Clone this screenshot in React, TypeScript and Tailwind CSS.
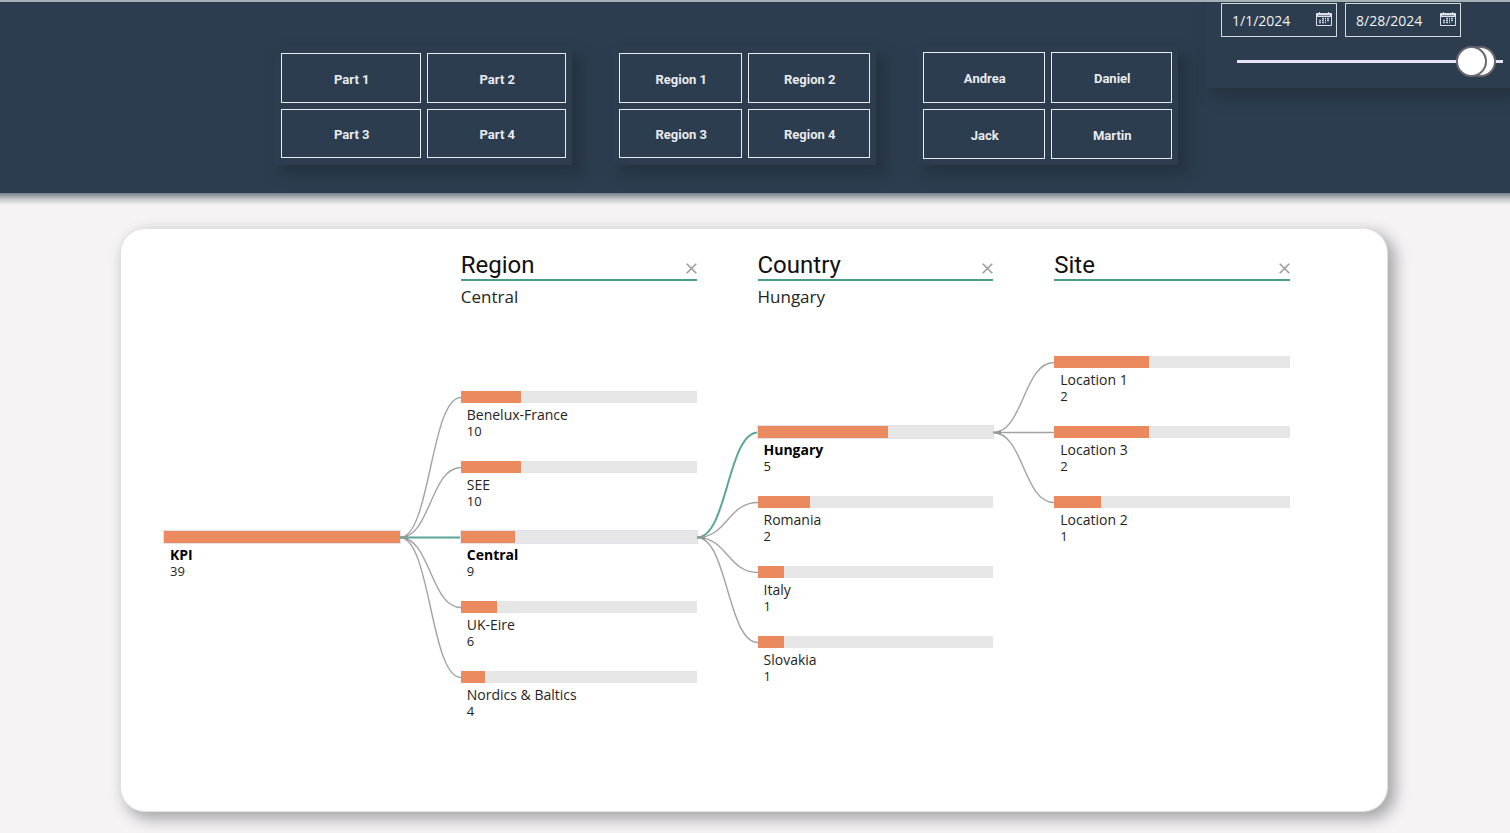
import React, { useState } from "react";

type TreeNode = { label: string; value: number; total: number; selected?: boolean };
type Link = { from: number; to: number; active?: boolean };

const root: TreeNode[] = [{ label: "KPI", value: 39, total: 39, selected: true }];

const regions: TreeNode[] = [
  { label: "Benelux-France", value: 10, total: 39 },
  { label: "SEE", value: 10, total: 39 },
  { label: "Central", value: 9, total: 39, selected: true },
  { label: "UK-Eire", value: 6, total: 39 },
  { label: "Nordics & Baltics", value: 4, total: 39 },
];

const countries: TreeNode[] = [
  { label: "Hungary", value: 5, total: 9, selected: true },
  { label: "Romania", value: 2, total: 9 },
  { label: "Italy", value: 1, total: 9 },
  { label: "Slovakia", value: 1, total: 9 },
];

const sites: TreeNode[] = [
  { label: "Location 1", value: 2, total: 5 },
  { label: "Location 3", value: 2, total: 5 },
  { label: "Location 2", value: 1, total: 5 },
];

const regionLinks: Link[] = [
  { from: 181, to: 41 },
  { from: 181, to: 111 },
  { from: 181, to: 251 },
  { from: 181, to: 321 },
  { from: 181, to: 181, active: true },
];

const countryLinks: Link[] = [
  { from: 181, to: 146 },
  { from: 181, to: 216 },
  { from: 181, to: 286 },
  { from: 181, to: 76, active: true },
];

const siteLinks: Link[] = [
  { from: 76, to: 6 },
  { from: 76, to: 76 },
  { from: 76, to: 146 },
];

function Slicer({ name, items, className }: { name: string; items: string[]; className: string }) {
  const [picked, setPicked] = useState<string | null>(null);
  return (
    <div
      role="group"
      aria-label={name}
      className={`mt-[45px] grid h-[118px] shrink-0 grid-cols-2 grid-rows-2 gap-1.5 bg-[#2b3d4f] px-1.5 shadow-[8px_8px_12px_rgba(36,48,60,0.85)] ${className}`}
    >
      {items.map((item) => (
        <button
          key={item}
          type="button"
          aria-pressed={picked === item}
          onClick={() => setPicked(picked === item ? null : item)}
          className="border border-[#e9ecef] pt-1 pl-0.5 text-[13px] leading-4 font-bold text-[#e9ebee]"
        >
          {item}
        </button>
      ))}
    </div>
  );
}

function CalendarIcon() {
  return (
    <svg viewBox="0 0 16 14" className="h-[14px] w-4" fill="none" aria-hidden="true">
      <path d="M0 1h16v4h-16z" fill="#dfe0ea" />
      <path d="M0.5 1.5h15v12h-15z" stroke="#dcdce8" />
      <path d="M3.5 0v2M12.5 0v2" stroke="#dcdce8" />
      <path d="M2 3.5h12" stroke="#7d899c" />
      <path
        d="M6 6.5h2M9 6.5h1M11 6.5h2M3 8.5h2M6 8.5h2M9 8.5h1M11 8.5h2M3 10.5h2M6 10.5h2M9 10.5h1"
        stroke="#c3cbe0"
        strokeWidth="1.6"
      />
    </svg>
  );
}

function DateBox({ label, initial }: { label: string; initial: string }) {
  const [value, setValue] = useState(initial);
  return (
    <div className="flex h-[34px] w-[116px] items-center border border-[#d5dade] pt-px pr-1 pl-2.5">
      <input
        type="text"
        aria-label={label}
        value={value}
        onChange={(e) => setValue(e.target.value)}
        className="w-0 min-w-0 flex-1 bg-transparent text-sm text-[#f1f2f4] outline-none [font-family:'Open_Sans',sans-serif]"
      />
      <button type="button" aria-label={`Pick ${label.toLowerCase()}`} className="pb-1">
        <CalendarIcon />
      </button>
    </div>
  );
}

const rangeClass =
  "pointer-events-none col-start-1 row-start-1 m-0 h-8 w-full appearance-none bg-transparent [&::-webkit-slider-runnable-track]:bg-transparent [&::-webkit-slider-thumb]:pointer-events-auto [&::-webkit-slider-thumb]:size-[31px] [&::-webkit-slider-thumb]:appearance-none [&::-webkit-slider-thumb]:rounded-full [&::-webkit-slider-thumb]:border-2 [&::-webkit-slider-thumb]:border-[#6a676e] [&::-webkit-slider-thumb]:bg-white";

function DatePanel() {
  const [start, setStart] = useState(93);
  const [end, setEnd] = useState(97);
  return (
    <div className="ml-[28px] h-[86px] w-[304px] shrink-0 bg-[#2b3d4f] pt-px pr-[7px] pl-[15px] shadow-[8px_8px_12px_rgba(36,48,60,0.85)]">
      <div className="flex gap-2">
        <DateBox label="Start date" initial="1/1/2024" />
        <DateBox label="End date" initial="8/28/2024" />
      </div>
      <div className="mt-2 ml-4 grid items-center">
        <div className="col-start-1 row-start-1 h-[3px] bg-[#e9e4f4]" />
        <input
          type="range"
          aria-label="Range end"
          value={end}
          onChange={(e) => setEnd(Number(e.target.value))}
          className={rangeClass}
        />
        <input
          type="range"
          aria-label="Range start"
          value={start}
          onChange={(e) => setStart(Number(e.target.value))}
          className={rangeClass}
        />
      </div>
    </div>
  );
}

function LevelHeader({ title, picked }: { title: string; picked?: string }) {
  return (
    <div className="min-w-0 flex-1">
      <div className="flex h-8 items-end justify-between border-b-2 border-[#4a9c8c]">
        <h2 className="text-2xl leading-7 text-[#111]">{title}</h2>
        <button type="button" aria-label={`Remove ${title}`} className="pb-[5px]">
          <svg viewBox="0 0 11 11" className="size-[11px]" fill="none" aria-hidden="true">
            <path d="M0.7 0.7l9.6 9.6M10.3 0.7l-9.6 9.6" stroke="#9b9ba3" strokeWidth="1.6" />
          </svg>
        </button>
      </div>
      <p className="mt-1 h-6 text-[17px] leading-6 text-[#252423] [font-family:'Open_Sans',sans-serif]">
        {picked}
      </p>
    </div>
  );
}

function Level({ nodes, className }: { nodes: TreeNode[]; className: string }) {
  return (
    <ul className={`min-w-0 flex-1 ${className}`}>
      {nodes.map((node) => (
        <li key={node.label} className="h-[70px]">
          <div
            className={`h-3 bg-[#e6e6e6] ${node.selected ? "outline outline-[#e2e1ec]" : ""}`}
          >
            <div
              className="h-full bg-[#eb895f]"
              style={{ width: `${(node.value / node.total) * 100}%` }}
            />
          </div>
          <div className="mt-1 pl-1.5 text-[#252423] [font-family:'Open_Sans',sans-serif]">
            <p className={`text-sm leading-4 ${node.selected ? "font-bold text-black" : ""}`}>
              {node.label}
            </p>
            <p className="text-[13px] leading-4">{node.value}</p>
          </div>
        </li>
      ))}
    </ul>
  );
}

function Links({ links }: { links: Link[] }) {
  return (
    <svg viewBox="0 0 61 385" className="h-[385px] w-[61px] shrink-0" fill="none" aria-hidden="true">
      {links.map((l) => (
        <path
          key={l.to}
          d={`M0 ${l.from + 0.5}C30.5 ${l.from + 0.5} 30.5 ${l.to + 0.5} 61 ${l.to + 0.5}`}
          stroke={l.active ? "#5aa598" : "#a3a3a3"}
          strokeWidth={l.active ? 2 : 1.4}
        />
      ))}
      <path d={`M0 ${links[0].from + 0.5}l8 -2.5v5z`} fill="#8f9a98" />
    </svg>
  );
}

export default function App() {
  return (
    <div className="min-h-screen overflow-x-hidden bg-[#f5f3f4] pb-[22px] [font-family:Roboto,sans-serif]">
      <header className="flex items-start justify-end overflow-hidden border-t-2 border-[#a3b1b7] bg-[#2b3d4f] pb-[28px]">
        <Slicer
          name="Part"
          items={["Part 1", "Part 2", "Part 3", "Part 4"]}
          className="w-[297px] pt-1.5 pb-[7px]"
        />
        <Slicer
          name="Region"
          items={["Region 1", "Region 2", "Region 3", "Region 4"]}
          className="ml-[41px] w-[263px] pt-1.5 pb-[7px]"
        />
        <Slicer
          name="Owner"
          items={["Andrea", "Daniel", "Jack", "Martin"]}
          className="ml-[41px] w-[261px] pt-[5px] pb-1.5"
        />
        <DatePanel />
      </header>
      <div className="h-3 bg-linear-to-b from-[#76818a] via-[#c3c5c9] to-[#f5f3f4]" />

      <main className="mt-6 mr-[123px] ml-[121px] rounded-3xl bg-white pt-5 pr-[97px] pb-[70px] pl-[43px] shadow-[0_0_0_1px_#e3e3e4,6px_6px_14px_3px_rgba(70,72,78,0.42)]">
        <div className="flex gap-[61px]">
          <div className="flex-1" />
          <LevelHeader title="Region" picked="Central" />
          <LevelHeader title="Country" picked="Hungary" />
          <LevelHeader title="Site" />
        </div>
        <div className="mt-[47px] flex items-start">
          <Level nodes={root} className="pt-[175px]" />
          <Links links={regionLinks} />
          <Level nodes={regions} className="pt-[35px]" />
          <Links links={countryLinks} />
          <Level nodes={countries} className="pt-[70px]" />
          <Links links={siteLinks} />
          <Level nodes={sites} className="pt-0" />
        </div>
      </main>
    </div>
  );
}
